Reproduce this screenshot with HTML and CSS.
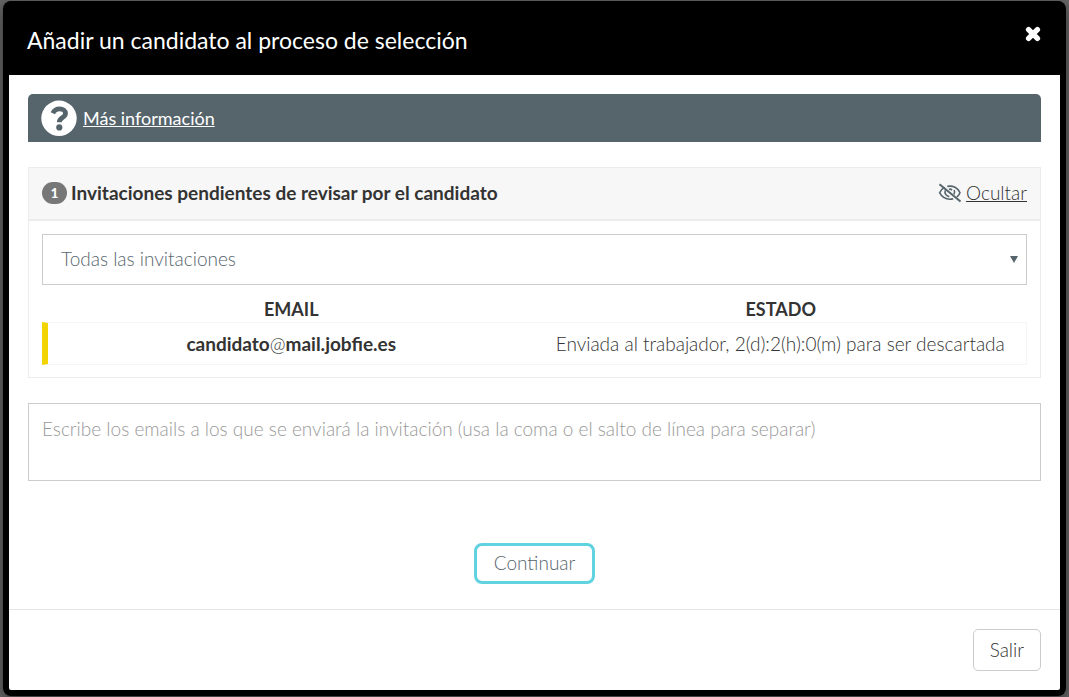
FILE: index.html
```html
<!DOCTYPE html>
<html lang="es">
<head>
    <meta charset="UTF-8">
    <meta name="viewport" content="width=device-width, initial-scale=1.0">
    <title>Añadir un candidato</title>
    <link rel="stylesheet" href="styles.css">
</head>
<body>
    <div class="modal" role="dialog" aria-labelledby="modal-title">
        <div class="modal-header">
            <h1 class="modal-title" id="modal-title">Añadir un candidato al proceso de selección</h1>
            <button type="button" class="modal-close" aria-label="Cerrar">
                <svg width="16" height="16" viewBox="0 0 16 16"><path d="M3.6 3.6L12.4 12.4M12.4 3.6L3.6 12.4" stroke="#fff" stroke-width="5.4" stroke-linecap="round"/></svg>
            </button>
        </div>
        <div class="modal-body">
            <div class="info-bar">
                <svg width="36" height="36" viewBox="0 0 36 36">
                    <circle cx="18" cy="18.3" r="17.7" fill="#fff"/>
                    <path d="M11.8 13.2C13.3 10 15.6 8.8 18.6 8.8C22 8.8 24.5 10.7 24.5 13.5C24.5 17.7 18.3 17.4 18.3 22.2" fill="none" stroke="#56646c" stroke-width="4.8"/>
                    <circle cx="18.3" cy="27.4" r="3.1" fill="#56646c"/>
                </svg>
                <a href="#">Más información</a>
            </div>
            <div class="panel">
                <div class="panel-header">
                    <span class="badge">1</span>
                    <h2 class="panel-title">Invitaciones pendientes de revisar por el candidato</h2>
                    <svg width="24" height="20" viewBox="0 0 24 20" fill="none" stroke="#56646c" stroke-width="1.6">
                        <path d="M6.5 4.4C4.2 5.7 2.5 7.5 1.6 9.7C3.7 13.9 7.5 16.2 12 16.2C13.2 16.2 14.2 16 15.2 15.7M9.3 3.4C14.8 2.2 20 4.7 22 9.7C21.3 11.4 20.2 12.8 18.8 13.8"/>
                        <path d="M7.3 7.3C6.3 10.3 8.1 13.2 11.3 13.6M11 6.5C11.8 6 13.2 6.2 14 7.2M16.2 7C16.8 8.5 16.7 10 16 11.3"/>
                        <path d="M1.5 1.2L22.5 18.4" stroke-width="2"/>
                    </svg>
                    <a href="#" class="panel-toggle">Ocultar</a>
                </div>
                <div class="panel-body">
                    <div class="select-box">
                        <select class="select" aria-label="Filtrar invitaciones">
                            <option>Todas las invitaciones</option>
                        </select>
                    </div>
                    <table class="invitations">
                        <thead>
                            <tr>
                                <th>EMAIL</th>
                                <th>ESTADO</th>
                            </tr>
                        </thead>
                        <tbody>
                            <tr>
                                <td class="email">candidato<span class="at">@</span>mail.jobfie.es</td>
                                <td class="state">Enviada al trabajador, 2(d):2(h):0(m) para ser descartada</td>
                            </tr>
                        </tbody>
                    </table>
                </div>
            </div>
            <textarea class="emails" aria-label="Emails" placeholder="Escribe los emails a los que se enviará la invitación (usa la coma o el salto de línea para separar)"></textarea>
            <div class="actions">
                <button type="button" class="btn btn-primary">Continuar</button>
            </div>
        </div>
        <div class="modal-footer">
            <button type="button" class="btn">Salir</button>
        </div>
    </div>
</body>
</html>
```
FILE: styles.css
```css
* {
    box-sizing: border-box;
}
body {
    margin: 0;
    background-color: #666;
    font-family: Lato, "Open Sans", sans-serif;
    font-size: 19px;
    font-weight: 300;
    line-height: 24px;
    color: #333;
}
button, select, textarea {
    font: inherit;
    color: inherit;
}
svg {
    display: block;
    flex: none;
}
.modal {
    margin: 1px 3px;
    border: 6px solid #000;
    border-top: 0;
    border-radius: 8px;
    background-color: #000;
    box-shadow: 0 4px 14px rgba(0, 0, 0, .5);
}
.modal-header {
    display: flex;
    align-items: flex-start;
    justify-content: space-between;
    padding: 24px 18px 20px;
    color: #fff;
}
.modal-title {
    margin: 0;
    font-size: 23px;
    font-weight: 400;
    line-height: 30px;
}
.modal-close {
    padding: 1px;
    border: 0;
    background: none;
    cursor: pointer;
}
.modal-body {
    padding: 19px 19px 25px;
    background-color: #fff;
}
.info-bar {
    display: flex;
    align-items: center;
    gap: 6px;
    height: 48px;
    margin-bottom: 25px;
    padding: 0 13px;
    border-radius: 5px 5px 0 0;
    background-color: #56646c;
    font-size: 18px;
    font-weight: 400;
}
.info-bar a {
    color: #fff;
}
.panel {
    margin-bottom: 25px;
    border: 1px solid #ececec;
}
.panel-header {
    display: flex;
    align-items: center;
    gap: 4px;
    padding: 13px 13px 14px;
    border-bottom: 2px solid #ececec;
    background-color: #f7f7f7;
}
.badge {
    width: 25px;
    border-radius: 11px;
    background-color: #777;
    color: #fff;
    font-size: 13px;
    font-weight: 900;
    line-height: 22px;
    text-align: center;
}
.panel-title {
    flex: 1;
    margin: 0;
    font-size: 19px;
    font-weight: 700;
}
.panel-toggle {
    color: #333;
}
.panel-body {
    padding: 13px 13px 12px;
}
.select-box {
    position: relative;
}
.select-box::after {
    content: "";
    position: absolute;
    top: 22px;
    right: 9px;
    border: 4px solid transparent;
    border-top: 7px solid #56646c;
    border-bottom: 0;
    pointer-events: none;
}
.select {
    display: block;
    width: 100%;
    height: 51px;
    padding: 0 18px 2px;
    border: 1px solid #ccc;
    border-radius: 0;
    background-color: #fff;
    color: #56646c;
    appearance: none;
}
.invitations {
    width: 100%;
    table-layout: fixed;
    border-collapse: separate;
    border-spacing: 0;
    text-align: center;
}
.invitations th {
    padding: 12px 0 1px;
    border-left: 6px solid transparent;
    font-size: 18px;
    font-weight: 700;
}
.invitations th + th {
    border-left: 0;
}
.invitations td {
    padding: 9px 0 8px;
    border-top: 1px solid #f5f5f5;
    border-bottom: 1px solid #f5f5f5;
}
.invitations .email {
    border-left: 6px solid #f2d500;
    font-weight: 700;
}
.at {
    font-weight: 300;
}
.invitations .state {
    border-right: 1px solid #f5f5f5;
}
.emails {
    display: block;
    width: 100%;
    height: 78px;
    padding: 13px;
    border: 1px solid #ccc;
    resize: none;
}
.emails::placeholder {
    color: #999;
}
.actions {
    margin-top: 62px;
    text-align: center;
}
.btn {
    padding: 8px 16px;
    border: 1px solid #ccc;
    border-radius: 5px;
    background-color: #fff;
    cursor: pointer;
}
.btn-primary {
    padding: 5px 17px 6px;
    border: 3px solid #61d2e0;
    border-radius: 8px;
    color: #56646c;
}
.modal-footer {
    padding: 19px;
    border-top: 1px solid #e5e5e5;
    border-radius: 0 0 2px 2px;
    background-color: #fff;
    text-align: right;
}
```
